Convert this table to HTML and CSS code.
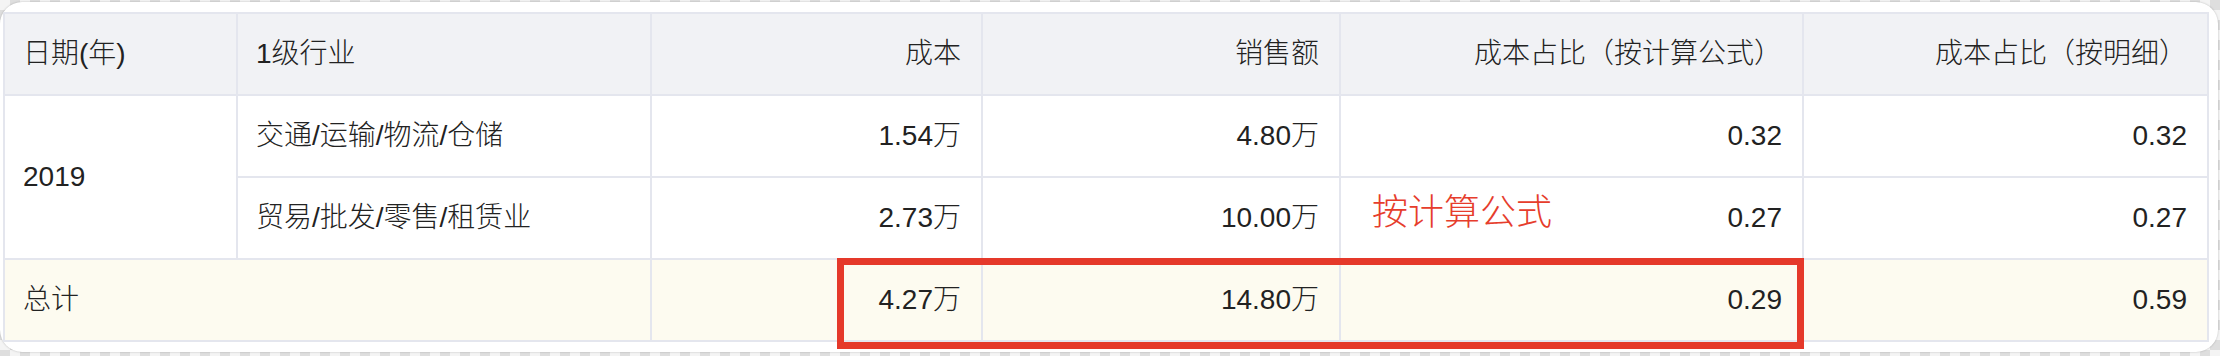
FILE: index.html
```html
<!DOCTYPE html>
<html lang="zh-CN">
<head>
<meta charset="utf-8">
<title>成本占比</title>
<link rel="stylesheet" href="styles.css">
</head>
<body>
<div class="window">
  <div class="grid">
    <div class="cell head">日期(年)</div>
    <div class="cell head">1级行业</div>
    <div class="cell head num">成本</div>
    <div class="cell head num">销售额</div>
    <div class="cell head num">成本占比（按计算公式）</div>
    <div class="cell head num">成本占比（按明细）</div>

    <div class="cell span-rows">2019</div>
    <div class="cell">交通/运输/物流/仓储</div>
    <div class="cell num">1.54万</div>
    <div class="cell num">4.80万</div>
    <div class="cell num">0.32</div>
    <div class="cell num">0.32</div>

    <div class="cell">贸易/批发/零售/租赁业</div>
    <div class="cell num">2.73万</div>
    <div class="cell num">10.00万</div>
    <div class="cell num">0.27</div>
    <div class="cell num">0.27</div>

    <div class="cell total span-cols">总计</div>
    <div class="cell total num">4.27万</div>
    <div class="cell total num">14.80万</div>
    <div class="cell total num">0.29</div>
    <div class="cell total num">0.59</div>
  </div>
  <div class="note">按计算公式</div>
  <div class="highlight"></div>
</div>
</body>
</html>
```
FILE: styles.css
```css
html, body {
  margin: 0;
  padding: 0;
}
body {
  width: 2220px;
  height: 356px;
  overflow: hidden;
  background: repeating-conic-gradient(#dedede 0% 25%, #f4f4f4 0% 50%) 0 0 / 20px 20px;
  font-family: "Liberation Sans", "Noto Sans CJK SC", sans-serif;
  color: #222;
}
.window {
  position: relative;
  box-sizing: border-box;
  width: 2218px;
  height: 350px;
  margin-top: 2px;
  background: #fff;
  border-radius: 22px;
  box-shadow: 0 0 2px rgba(0, 0, 0, 0.25);
  padding: 10px 9px 10px 3px;
}
.grid {
  display: grid;
  grid-template-columns: 231px 412px 329px 356px 461px 403px;
  grid-template-rows: repeat(4, 80px);
  gap: 2px;
  padding: 2px;
  background: #e4e6ee;
  width: max-content;
}
.cell {
  background: #fff;
  display: flex;
  align-items: center;
  padding: 0 18px;
  font-size: 28px;
  font-weight: 300;
  line-height: 1;
  white-space: nowrap;
}
.head {
  background: #f1f2f5;
}
.num {
  justify-content: flex-end;
  padding-right: 20px;
}
.total {
  background: #fdfbf0;
}
.span-rows {
  grid-row: span 2;
}
.span-cols {
  grid-column: span 2;
}
.note {
  position: absolute;
  left: 1372px;
  top: 189px;
  font-family: "Noto Sans CJK SC", sans-serif;
  font-size: 36px;
  font-weight: 300;
  line-height: 36px;
  color: #e63d2c;
  white-space: nowrap;
}
.highlight {
  position: absolute;
  left: 837px;
  top: 256px;
  width: 967px;
  height: 91px;
  box-sizing: border-box;
  border: 7px solid #e5392a;
}
```
